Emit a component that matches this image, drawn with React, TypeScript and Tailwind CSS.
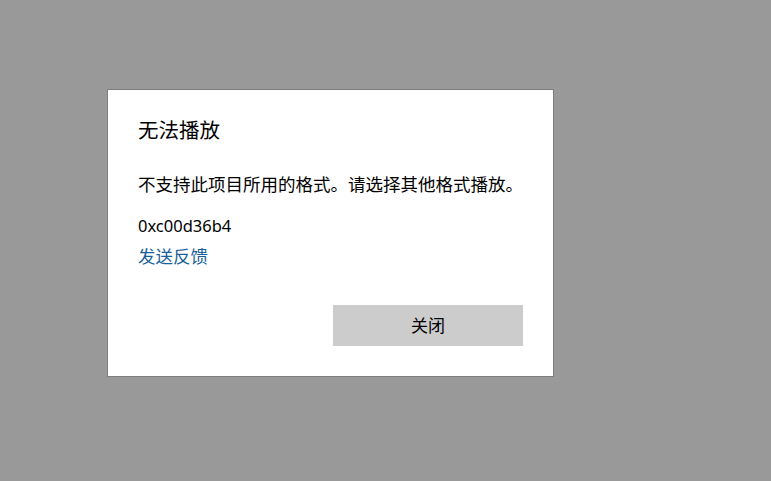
import React from "react";

const App: React.FC = () => {
  return (
    <div
      className="w-[771px] h-[481px] bg-[#999999] pt-[89px] pl-[107px] overflow-hidden"
      style={{ fontFamily: '"Noto Sans", "Noto Sans CJK SC", sans-serif' }}
    >
      {/* Dialog */}
      <div className="w-[447px] h-[288px] bg-white border border-[#7d7d7d] flex flex-col px-[30px]">
        <h1 className="mt-[26px] text-[20.5px] leading-[28px] text-black font-normal">无法播放</h1>
        <p className="mt-[28px] text-[17.5px] leading-[24px] text-black">
          不支持此项目所用的格式。请选择其他格式播放。
        </p>
        <p className="mt-[18px] text-[16.5px] leading-[24px] text-black">0xc00d36b4</p>
        <a href="#" className="mt-[6px] text-[17.5px] leading-[24px] text-[#1a5f9a] w-fit">
          发送反馈
        </a>

        <div className="mt-[37px] flex justify-end">
          <button className="w-[190px] h-[41px] bg-[#cccccc] text-[17px] text-black">关闭</button>
        </div>
      </div>
    </div>
  );
};

export default App;
